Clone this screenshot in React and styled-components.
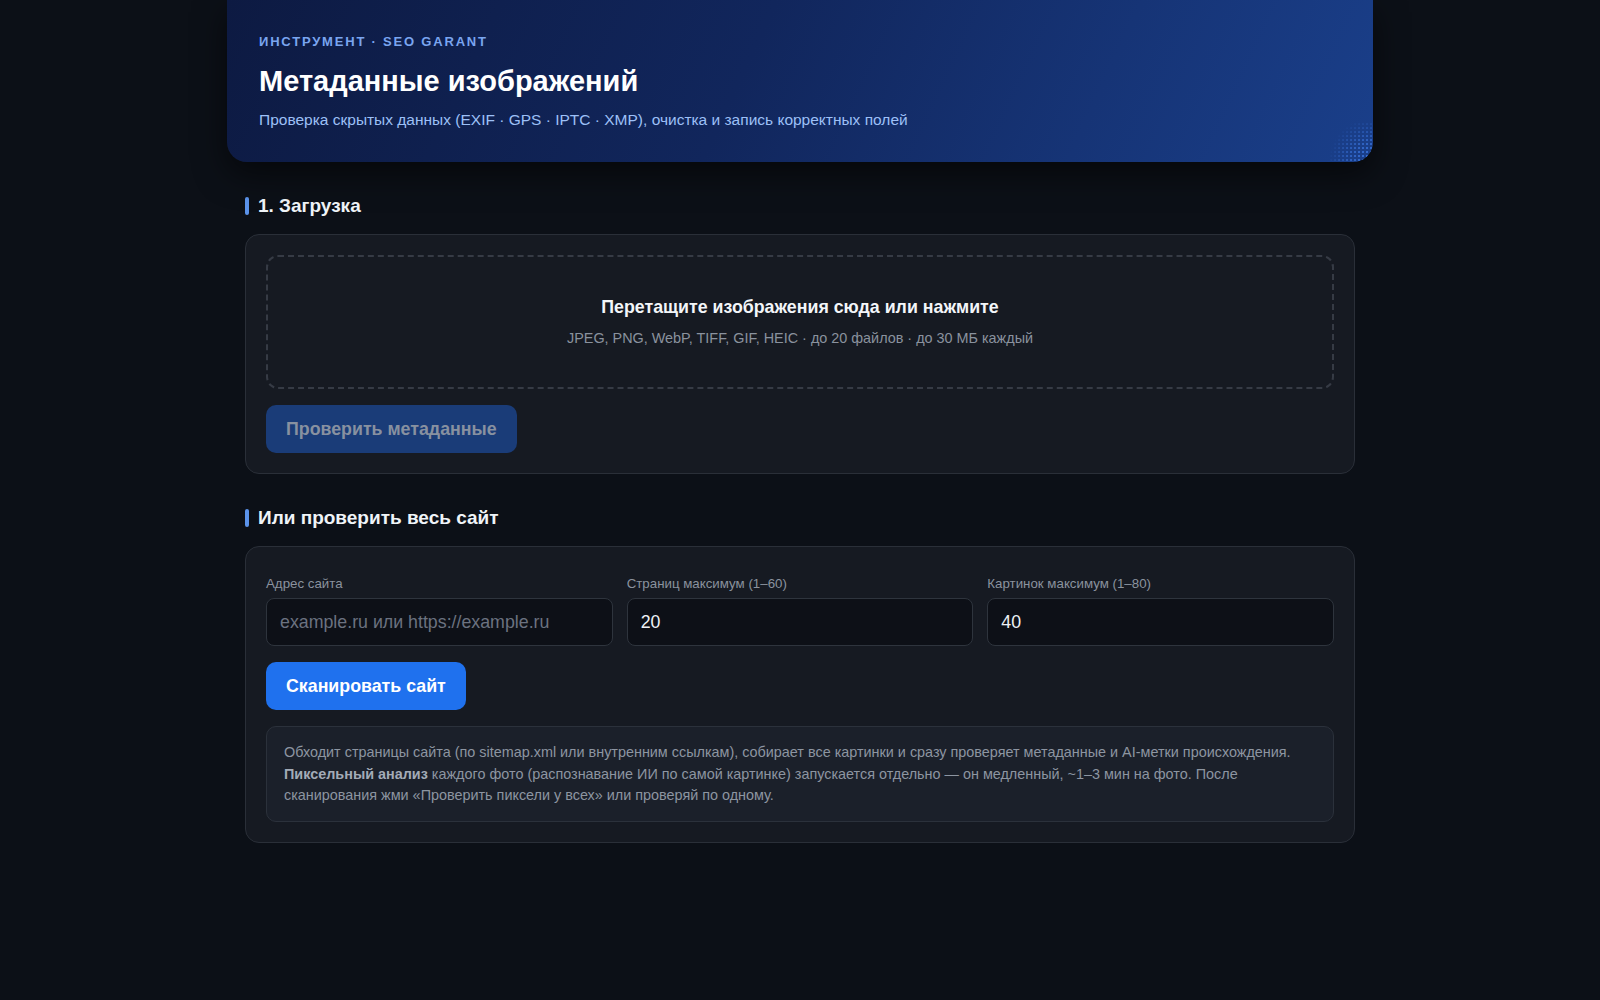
import styled, { createGlobalStyle } from "styled-components";

const GlobalStyle = createGlobalStyle`
	* {
		box-sizing: border-box;
	}
	body {
		margin: 0;
		background: #0c1017;
		font-family: "Liberation Sans", Arial, sans-serif;
		color: #e6edf3;
	}
`;

const Page = styled.div`
	width: 1146px;
	margin: 0 auto;
	padding-bottom: 60px;
`;

const Hero = styled.header`
	position: relative;
	overflow: hidden;
	padding: 33px 32px 31px;
	border-radius: 0 0 20px 20px;
	background: linear-gradient(115deg, #0d1a42 0%, #11265c 45%, #163476 75%, #1a3f8a 100%);
	box-shadow: 0 12px 32px rgba(0, 0, 0, 0.55);

	/* dotted corner decoration */
	&::after {
		content: "";
		position: absolute;
		right: 0;
		bottom: 0;
		width: 44px;
		height: 40px;
		background-image: radial-gradient(circle, rgba(64, 128, 240, 0.85) 0.7px, transparent 1px);
		background-size: 4px 4px;
		-webkit-mask-image: radial-gradient(circle at 100% 100%, #000 0%, rgba(0, 0, 0, 0.6) 40%, transparent 75%);
		mask-image: radial-gradient(circle at 100% 100%, #000 0%, rgba(0, 0, 0, 0.6) 40%, transparent 75%);
	}
`;

const Eyebrow = styled.div`
	font-size: 13px;
	line-height: 18px;
	font-weight: 700;
	letter-spacing: 1.8px;
	text-transform: uppercase;
	color: #7aa5f0;
`;

const Title = styled.h1`
	margin: 13px 0 0;
	font-size: 29px;
	line-height: 35px;
	font-weight: 700;
	color: #ffffff;
`;

const Subtitle = styled.p`
	margin: 10px 0 0;
	font-size: 15.5px;
	line-height: 22px;
	color: #9dc0f7;
`;

const Section = styled.section`
	padding: 32px 18px 0;
`;

const SectionTitle = styled.h2`
	display: flex;
	align-items: center;
	gap: 9px;
	margin: 0 0 16px;
	font-size: 19px;
	line-height: 24px;
	font-weight: 700;
	color: #f0f4f8;

	&::before {
		content: "";
		width: 4px;
		height: 18px;
		border-radius: 2px;
		background: #5b93ea;
	}
`;

const Card = styled.div`
	padding: 20px;
	border: 1px solid #2a2f38;
	border-radius: 14px;
	background: #161a22;
`;

const DropZone = styled.div`
	padding: 39px 20px 39px;
	border: 2px dashed #363b45;
	border-radius: 12px;
	text-align: center;
	cursor: pointer;
`;

const DropTitle = styled.div`
	font-size: 17.8px;
	line-height: 22px;
	font-weight: 700;
	color: #f3f6f9;
`;

const DropHint = styled.div`
	margin-top: 10px;
	font-size: 14.4px;
	line-height: 20px;
	color: #8a929e;
`;

const Button = styled.button`
	display: inline-flex;
	align-items: center;
	height: 48px;
	margin-top: ${({ $gap }) => $gap}px;
	padding: 0 20px;
	border: none;
	border-radius: 10px;
	font-family: inherit;
	font-size: 17.8px;
	font-weight: 700;
	background: ${({ disabled }) => (disabled ? "#1a3c78" : "#1f71ee")};
	color: ${({ disabled }) => (disabled ? "#8891a0" : "#ffffff")};
	cursor: ${({ disabled }) => (disabled ? "default" : "pointer")};
`;

const Fields = styled.div`
	display: grid;
	grid-template-columns: repeat(3, 1fr);
	gap: 14px;
	margin-top: 8px;
`;

const Field = styled.label`
	display: flex;
	flex-direction: column;
	gap: 5px;
`;

const FieldLabel = styled.span`
	font-size: 13.3px;
	line-height: 18px;
	color: #8a929e;
`;

const Input = styled.input`
	height: 48px;
	padding: 0 13px;
	border: 1px solid #2e343d;
	border-radius: 8px;
	background: #0d1017;
	font-family: inherit;
	font-size: 17.8px;
	color: #eef2f6;
	outline: none;

	&::placeholder {
		color: #6b7280;
	}
`;

const Note = styled.div`
	margin-top: 16px;
	padding: 15px 17px 14px;
	border: 1px solid #2b313b;
	border-radius: 10px;
	background: #1b202a;
	font-size: 14.4px;
	line-height: 21.5px;
	color: #8d95a1;

	b {
		color: #a3abb7;
	}
`;

export default function App() {
	return (
		<>
			<GlobalStyle />
			<Page>
				<Hero>
					<Eyebrow>Инструмент · SEO Garant</Eyebrow>
					<Title>Метаданные изображений</Title>
					<Subtitle>
						Проверка скрытых данных (EXIF · GPS · IPTC · XMP), очистка и запись корректных полей
					</Subtitle>
				</Hero>

				<Section>
					<SectionTitle>1. Загрузка</SectionTitle>
					<Card>
						<DropZone>
							<DropTitle>Перетащите изображения сюда или нажмите</DropTitle>
							<DropHint>
								JPEG, PNG, WebP, TIFF, GIF, HEIC · до 20 файлов · до 30 МБ каждый
							</DropHint>
						</DropZone>
						<Button $gap={16} disabled>
							Проверить метаданные
						</Button>
					</Card>
				</Section>

				<Section>
					<SectionTitle>Или проверить весь сайт</SectionTitle>
					<Card>
						<Fields>
							<Field>
								<FieldLabel>Адрес сайта</FieldLabel>
								<Input placeholder="example.ru или https://example.ru" />
							</Field>
							<Field>
								<FieldLabel>Страниц максимум (1–60)</FieldLabel>
								<Input defaultValue="20" />
							</Field>
							<Field>
								<FieldLabel>Картинок максимум (1–80)</FieldLabel>
								<Input defaultValue="40" />
							</Field>
						</Fields>
						<Button $gap={16}>Сканировать сайт</Button>
						<Note>
							Обходит страницы сайта (по sitemap.xml или внутренним ссылкам), собирает все картинки и
							сразу проверяет метаданные и AI-метки происхождения. <b>Пиксельный анализ</b> каждого
							фото (распознавание ИИ по самой картинке) запускается отдельно — он медленный, ~1–3 мин
							на фото. После сканирования жми «Проверить пиксели у всех» или проверяй по одному.
						</Note>
					</Card>
				</Section>
			</Page>
		</>
	);
}
